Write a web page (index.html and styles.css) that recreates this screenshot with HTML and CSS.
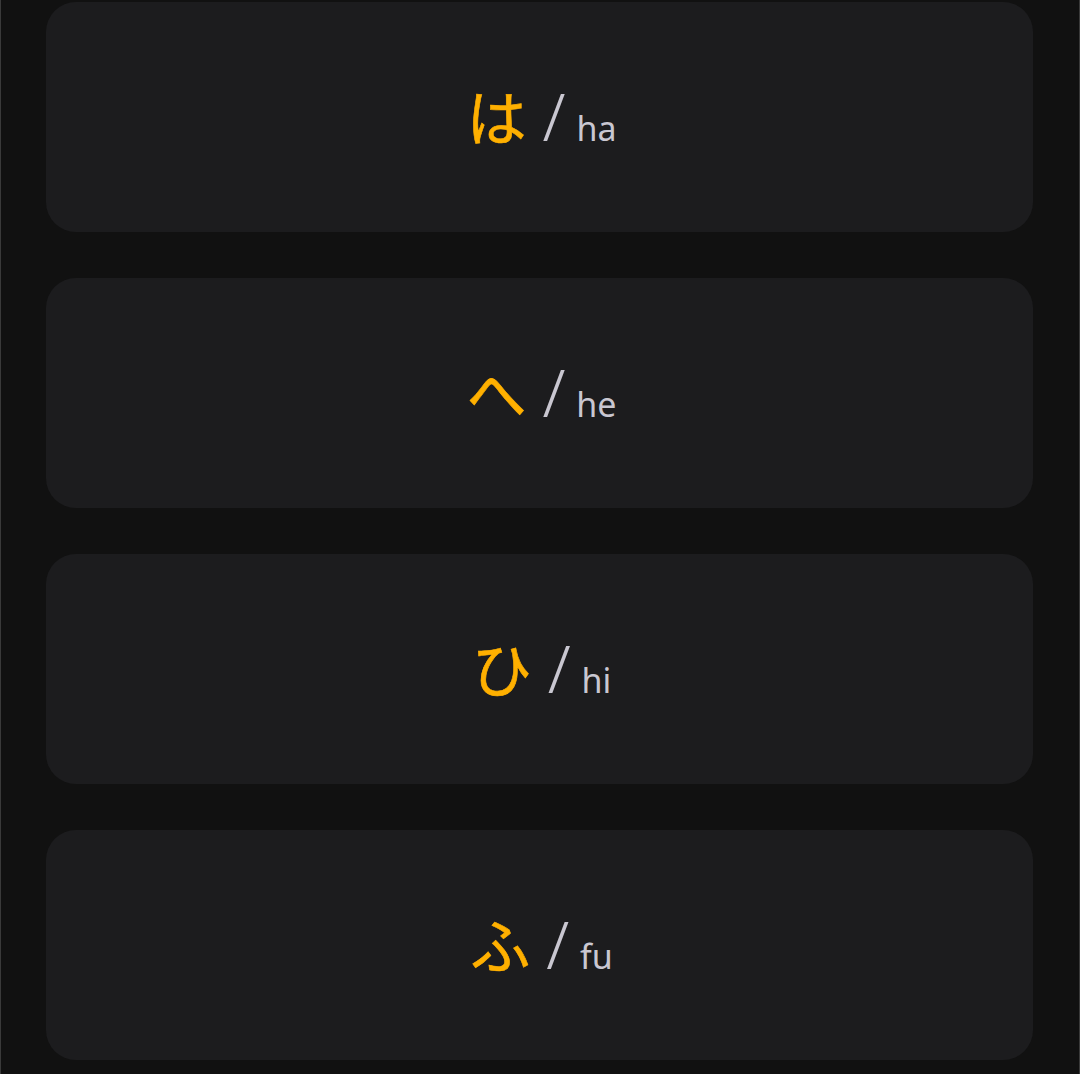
FILE: index.html
```html
<!DOCTYPE html>
<html lang="ja">
<head>
    <meta charset="UTF-8">
    <meta name="viewport" content="width=device-width, initial-scale=1.0">
    <title>かな</title>
    <link rel="stylesheet" href="styles.css">
</head>
<body>
<div class="list">
    <div class="card">
        <span class="kana">は</span>
        <span class="slash">/</span>
        <span class="romaji">ha</span>
    </div>
    <div class="card">
        <span class="kana">へ</span>
        <span class="slash">/</span>
        <span class="romaji">he</span>
    </div>
    <div class="card">
        <span class="kana">ひ</span>
        <span class="slash">/</span>
        <span class="romaji">hi</span>
    </div>
    <div class="card">
        <span class="kana">ふ</span>
        <span class="slash">/</span>
        <span class="romaji">fu</span>
    </div>
</div>
</body>
</html>
```

FILE: styles.css
```css
* {
    margin: 0;
    padding: 0;
    box-sizing: border-box;
}

body {
    background: #111111;
    font-family: "Noto Sans", "Noto Sans CJK JP", sans-serif;
}

.list {
    min-height: 100vh;
    border-left: 1px solid #3a3a3a;
    border-right: 1px solid #3a3a3a;
    padding: 2px 46px 2px 45px;
    display: flex;
    flex-direction: column;
    gap: 46px;
}

.card {
    height: 230px;
    background: #1c1c1e;
    border-radius: 30px;
    display: flex;
    justify-content: center;
    align-items: baseline;
    align-content: center;
    flex-wrap: wrap;
    padding-bottom: 4px;
    padding-left: 4px;
}

.kana {
    font-family: "Noto Sans CJK JP", sans-serif;
    font-size: 60px;
    color: #ffb000;
    line-height: 1;
    -webkit-text-stroke: 0.6px #ffb000;
}

.slash {
    margin-left: 16px;
    font-size: 66px;
    font-weight: 300;
    color: #c9c7d1;
    line-height: 1;
}

.romaji {
    margin-left: 11px;
    font-size: 34px;
    color: #c9c7d1;
    line-height: 1;
}
```
